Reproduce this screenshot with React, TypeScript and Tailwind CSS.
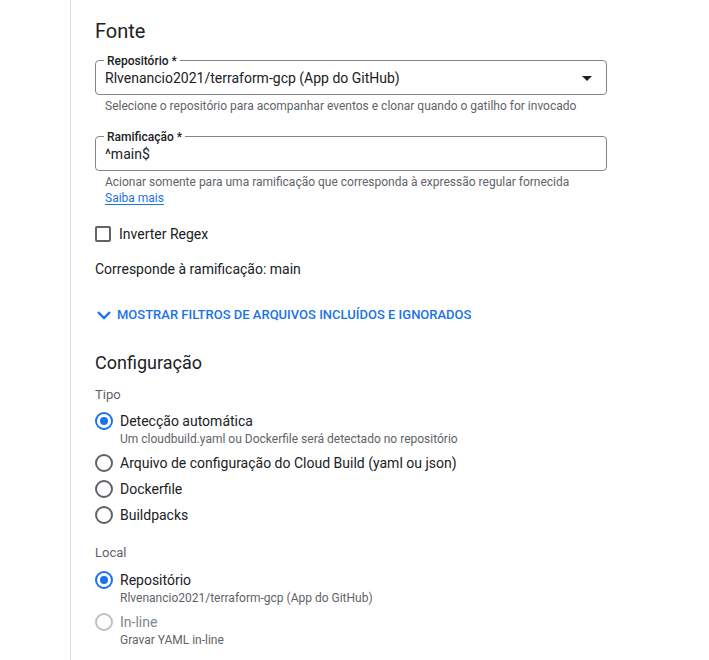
import React, { useState } from "react";

type RadioProps = {
  label: string;
  sub?: string;
  checked?: boolean;
  disabled?: boolean;
  onClick?: () => void;
};

function Radio({ label, sub, checked, disabled, onClick }: RadioProps) {
  return (
    <div className="py-[3px] cursor-pointer" onClick={disabled ? undefined : onClick}>
      <div className="flex items-center gap-[7px] h-[20px]">
        <span
          className={
            "w-[18px] h-[18px] rounded-full border-2 flex items-center justify-center shrink-0 " +
            (disabled
              ? "border-[#bdc1c6]"
              : checked
              ? "border-[#1a73e8]"
              : "border-[#5f6368]")
          }
        >
          {checked ? <span className="w-[8px] h-[8px] rounded-full bg-[#1a73e8]" /> : null}
        </span>
        <span className={"text-[14px] leading-[20px] " + (disabled ? "text-[#80868b]" : "text-[#202124]")}>
          {label}
        </span>
      </div>
      {sub ? (
        <div className="pl-[25px] text-[12px] leading-[16px] text-[#5f6368]">{sub}</div>
      ) : null}
    </div>
  );
}

function Field({ label, value, select }: { label: string; value: string; select?: boolean }) {
  return (
    <div className="relative w-[512px] h-[35px] border border-[#80868b] rounded-[4px] flex items-center pl-[9px] pr-[14px]">
      <span className="absolute left-[8px] top-0 -translate-y-1/2 bg-white px-[3px] text-[12px] leading-[14px] font-medium text-[#202124]">
        {label}
      </span>
      <span className="flex-1 text-[14px] leading-[20px] text-[#202124] mt-[1px]">{value}</span>
      {select ? (
        <svg width="10" height="5" viewBox="0 0 10 5" className="mt-[1px]">
          <path d="M0 0 L10 0 L5 5 Z" fill="#202124" />
        </svg>
      ) : null}
    </div>
  );
}

export default function App() {
  const [tipo, setTipo] = useState<number>(0);
  const [inverter, setInverter] = useState<boolean>(false);

  return (
    <div className="w-full h-[660px] overflow-hidden bg-white" style={{ fontFamily: "Roboto, 'Noto Sans', sans-serif" }}>
      <div className="ml-[70px] h-full border-l border-[#dadce0] pl-[24px] pt-[17px]">
        <h2 className="text-[20px] leading-[28px] text-[#202124]">Fonte</h2>

        <div className="mt-[15px]">
          <Field label="Repositório *" value="Rlvenancio2021/terraform-gcp (App do GitHub)" select />
          <p className="mt-[3px] pl-[10px] text-[12px] leading-[16px] text-[#5f6368]">
            Selecione o repositório para acompanhar eventos e clonar quando o gatilho for invocado
          </p>
        </div>

        <div className="mt-[22px]">
          <Field label="Ramificação *" value="^main$" />
          <p className="mt-[3px] pl-[10px] text-[12px] leading-[16px] text-[#5f6368]">
            Acionar somente para uma ramificação que corresponda à expressão regular fornecida
          </p>
          <a href="#" className="block w-fit ml-[10px] text-[12px] leading-[16px] text-[#1a73e8] underline underline-offset-2">
            Saiba mais
          </a>
        </div>

        <label className="mt-[16px] flex items-center gap-[8px] h-[24px] cursor-pointer" onClick={() => setInverter(!inverter)}>
          <span className="w-[16px] h-[16px] border-2 border-[#5f6368] rounded-[2px] flex items-center justify-center">
            {inverter ? <span className="w-[8px] h-[8px] bg-[#5f6368]" /> : null}
          </span>
          <span className="text-[14px] leading-[20px] text-[#202124]">Inverter Regex</span>
        </label>

        <p className="mt-[13px] text-[14px] leading-[20px] text-[#202124]">Corresponde à ramificação: main</p>

        <button className="mt-[26px] flex items-center gap-[5px] h-[20px] text-[#1a73e8]">
          <svg width="16" height="10" viewBox="0 0 16 10" className="ml-[1px]">
            <polyline points="2,2 8,8 14,2" fill="none" stroke="#1a73e8" strokeWidth="2.4" />
          </svg>
          <span className="text-[13px] leading-[20px] font-medium uppercase">
            Mostrar filtros de arquivos incluídos e ignorados
          </span>
        </button>

        <h2 className="mt-[26px] text-[18px] leading-[24px] text-[#202124]">Configuração</h2>

        <p className="mt-[10px] text-[13px] leading-[20px] text-[#5f6368]">Tipo</p>
        <div className="mt-[3px]">
          <Radio
            label="Detecção automática"
            sub="Um cloudbuild.yaml ou Dockerfile será detectado no repositório"
            checked={tipo === 0}
            onClick={() => setTipo(0)}
          />
          <Radio label="Arquivo de configuração do Cloud Build (yaml ou json)" checked={tipo === 1} onClick={() => setTipo(1)} />
          <Radio label="Dockerfile" checked={tipo === 2} onClick={() => setTipo(2)} />
          <Radio label="Buildpacks" checked={tipo === 3} onClick={() => setTipo(3)} />
        </div>

        <p className="mt-[15px] text-[13px] leading-[20px] text-[#5f6368]">Local</p>
        <div className="mt-[4px]">
          <Radio label="Repositório" sub="Rlvenancio2021/terraform-gcp (App do GitHub)" checked />
          <Radio label="In-line" sub="Gravar YAML in-line" disabled />
        </div>
      </div>
    </div>
  );
}
